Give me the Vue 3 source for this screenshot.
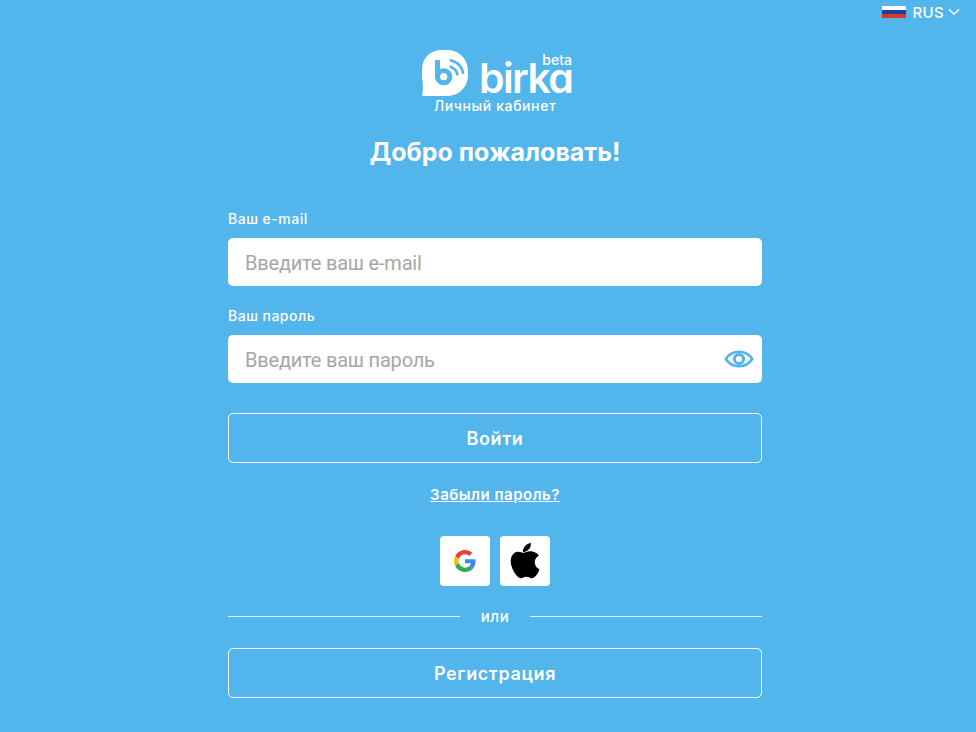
<script setup>
import { ref } from 'vue';

const email = ref('');
const password = ref('');
</script>
<template>
    <div class="page">
        <div class="lang">
            <span class="flag"><i class="white"></i><i class="blue"></i><i class="red"></i></span>
            <span class="lang-name">RUS</span>
            <svg class="chevron" width="12" height="8" viewBox="0 0 12 8" fill="none">
                <path d="M1 1.2 6 6.2 11 1.2" stroke="#fff" stroke-width="1.5" />
            </svg>
        </div>

        <div class="form-wrap">
            <div class="logo">
                <svg class="logo-mark" width="46" height="46" viewBox="0 0 46 46">
                    <path d="M20 0h5C37 0 46 9 46 21V25C46 37 37 46 25 46H0C1.500 40 1 34 0 28V20C0 8 8 0 20 0Z" fill="#fff" />
                    <path d="M13 10V26.500C13 31.500 17 35.300 21.700 35.300C26.500 35.300 30.300 31.500 30.300 26.700C30.300 22 26.500 18.200 21.700 18.200C20.500 18.200 19.300 18.400 18 19V10Z" fill="#52b5eb" />
                    <circle cx="21.700" cy="26.700" r="3.600" fill="#fff" />
                    <path d="M28.700 17C32 18 34.500 20.800 35.400 24.300M28.700 10.300C35 11.500 39.800 16.300 41 22.700" fill="none" stroke="#52b5eb" stroke-width="2.700" stroke-linecap="round" />
                </svg>
                <span class="logo-name">birka</span>
                <span class="logo-beta">beta</span>
            </div>
            <div class="subtitle">Личный кабинет</div>
            <h1 class="title">Добро пожаловать!</h1>

            <form class="form" @submit.prevent>
                <label class="label">Ваш e-mail</label>
                <input v-model="email" class="input" type="text" placeholder="Введите ваш e-mail" />

                <label class="label label-second">Ваш пароль</label>
                <div class="password">
                    <input v-model="password" class="input" type="password" placeholder="Введите ваш пароль" />
                    <svg class="eye" width="30" height="18" viewBox="0 0 30 18" fill="none">
                        <path d="M1.800 9C5 4 9.500 1.800 15 1.800S25 4 28.200 9C25 14 20.500 16.200 15 16.200S5 14 1.800 9Z" stroke="#52b5eb" stroke-width="2.600" />
                        <circle cx="15" cy="9" r="4.600" stroke="#52b5eb" stroke-width="3" />
                    </svg>
                </div>

                <button class="btn btn-login" type="submit">Войти</button>
                <a class="forgot" href="#">Забыли пароль?</a>

                <div class="socials">
                    <button class="social" type="button">
                        <svg width="22" height="22" viewBox="0 0 48 48">
                            <path fill="#ea4335" d="M24 9.500c3.500 0 6.700 1.200 9.200 3.600l6.900-6.900C35.900 2.400 30.500 0 24 0 14.600 0 6.500 5.400 2.600 13.200l8 6.200C12.500 13.700 17.800 9.500 24 9.500z" />
                            <path fill="#4285f4" d="M47 24.500c0-1.600-.1-3.100-.4-4.500H24v9.100h12.900c-.6 3-2.200 5.500-4.700 7.200l7.700 6c4.500-4.200 7.100-10.300 7.100-17.800z" />
                            <path fill="#fbbc05" d="M10.500 28.600c-.5-1.400-.8-3-.8-4.600s.3-3.200.8-4.600l-8-6.200C.9 16.400 0 20.100 0 24s.9 7.600 2.600 10.800l7.900-6.200z" />
                            <path fill="#34a853" d="M24 48c6.500 0 11.900-2.100 15.900-5.800l-7.700-6c-2.200 1.500-4.900 2.300-8.200 2.300-6.200 0-11.500-4.200-13.400-9.900l-8 6.200C6.500 42.600 14.600 48 24 48z" />
                        </svg>
                    </button>
                    <button class="social" type="button">
                        <svg width="30" height="36" viewBox="1.500 0 28.500 35">
                            <path fill="#000" d="M21.500 0c.2 2.300-.7 4.500-2 6.100-1.400 1.700-3.500 2.900-5.700 2.700-.3-2.200.8-4.500 2-5.900C17.200 1.300 19.600.1 21.500 0z" />
                            <path fill="#000" d="M29 12.300c-.2.100-3.700 2.100-3.700 6.400 0 5 4.400 6.700 4.500 6.800-.1.300-.7 2.400-2.200 4.700-1.400 2-2.900 4-5.100 4-2.200 0-2.900-1.300-5.400-1.300-2.600 0-3.400 1.300-5.400 1.300-2.200.1-3.900-2.100-5.300-4.100C3.500 26.100 1.300 20 2 15.500c.5-3.200 2.300-5.700 5.300-6.800 2.900-1 5.400.9 7.100.9 1.600 0 3.900-1.800 7-1.500 1.200.1 4.900.5 7.600 3.700z" />
                        </svg>
                    </button>
                </div>

                <div class="divider"><span>или</span></div>
                <button class="btn" type="button">Регистрация</button>
            </form>
        </div>
    </div>
</template>
<style>
html, body {
    margin: 0;
    background: #52b5eb;
}
</style>
<style scoped>
.page {
    height: 732px;
    overflow: hidden;
    background: #52b5eb;
    color: #fff;
    font-family: "Inter", "DejaVu Sans", sans-serif;
}

.lang {
    display: flex;
    justify-content: flex-end;
    align-items: center;
    height: 24px;
    padding-right: 16px;
}

.flag {
    display: flex;
    flex-direction: column;
    width: 24px;
    height: 13px;
    margin-right: 7px;
}

.flag i {
    flex: 1;
}

.flag .white {
    background: #fff;
}

.flag .blue {
    background: #1c3f9e;
}

.flag .red {
    background: #d5392c;
}

.lang-name {
    font-size: 15px;
    font-weight: 500;
    letter-spacing: 0.3px;
}

.chevron {
    margin-left: 4px;
}

.form-wrap {
    width: 534px;
    margin-left: 228px;
}

.logo {
    position: relative;
    display: flex;
    align-items: flex-end;
    width: 150px;
    height: 46px;
    margin: 26px auto 0;
    left: 2px;
}

.logo-mark {
    flex-shrink: 0;
}

.logo-name {
    margin-left: 11px;
    margin-bottom: 6px;
    font-size: 41px;
    font-weight: 600;
    line-height: 24px;
    letter-spacing: -1.6px;
    font-feature-settings: "cv11";
}

.logo-beta {
    position: absolute;
    right: 0;
    top: 4px;
    font-size: 14px;
    font-weight: 500;
    line-height: 12px;
}

.subtitle {
    margin-top: 1px;
    font-size: 14px;
    font-weight: 500;
    line-height: 18px;
    text-align: center;
    letter-spacing: 0.6px;
}

.title {
    margin: 22px 0 0;
    font-size: 25px;
    font-weight: 700;
    line-height: 30px;
    text-align: center;
}

.form {
    display: flex;
    flex-direction: column;
    margin-top: 44px;
}

.label {
    font-size: 14px;
    font-weight: 500;
    line-height: 16px;
    margin-bottom: 11px;
    letter-spacing: 0.5px;
}

.label-second {
    margin-top: 22px;
}

.input {
    box-sizing: border-box;
    width: 100%;
    height: 48px;
    padding: 2px 17px 0;
    border: none;
    border-radius: 5px;
    outline: none;
    background: #fff;
    font-family: "Roboto", sans-serif;
    font-size: 20px;
    letter-spacing: -0.2px;
    color: #333;
}

.input::placeholder {
    color: #a6a6a6;
    opacity: 1;
}

.password {
    position: relative;
    height: 48px;
}

.eye {
    position: absolute;
    right: 8px;
    top: 15px;
}

.btn {
    box-sizing: border-box;
    height: 50px;
    border: 1px solid #fff;
    border-radius: 5px;
    background: transparent;
    color: #fff;
    font-family: "Inter", "DejaVu Sans", sans-serif;
    font-size: 18px;
    font-weight: 600;
    letter-spacing: 0.6px;
    cursor: pointer;
}

.btn-login {
    margin-top: 30px;
}

.forgot {
    margin-top: 23px;
    color: #fff;
    font-size: 15px;
    font-weight: 600;
    line-height: 18px;
    letter-spacing: 0.5px;
    text-align: center;
    text-decoration: underline;
}

.socials {
    display: flex;
    justify-content: center;
    gap: 10px;
    margin-top: 32px;
}

.social {
    display: flex;
    align-items: center;
    justify-content: center;
    width: 50px;
    height: 50px;
    padding: 0;
    border: none;
    border-radius: 4px;
    background: #fff;
    cursor: pointer;
}

.divider {
    display: flex;
    align-items: center;
    gap: 21px;
    height: 18px;
    margin: 21px 0 23px;
    font-size: 15px;
    font-weight: 500;
    letter-spacing: 0.6px;
}

.divider::before,
.divider::after {
    content: "";
    flex: 1;
    height: 1px;
    background: rgba(255, 255, 255, 0.8);
}
</style>
